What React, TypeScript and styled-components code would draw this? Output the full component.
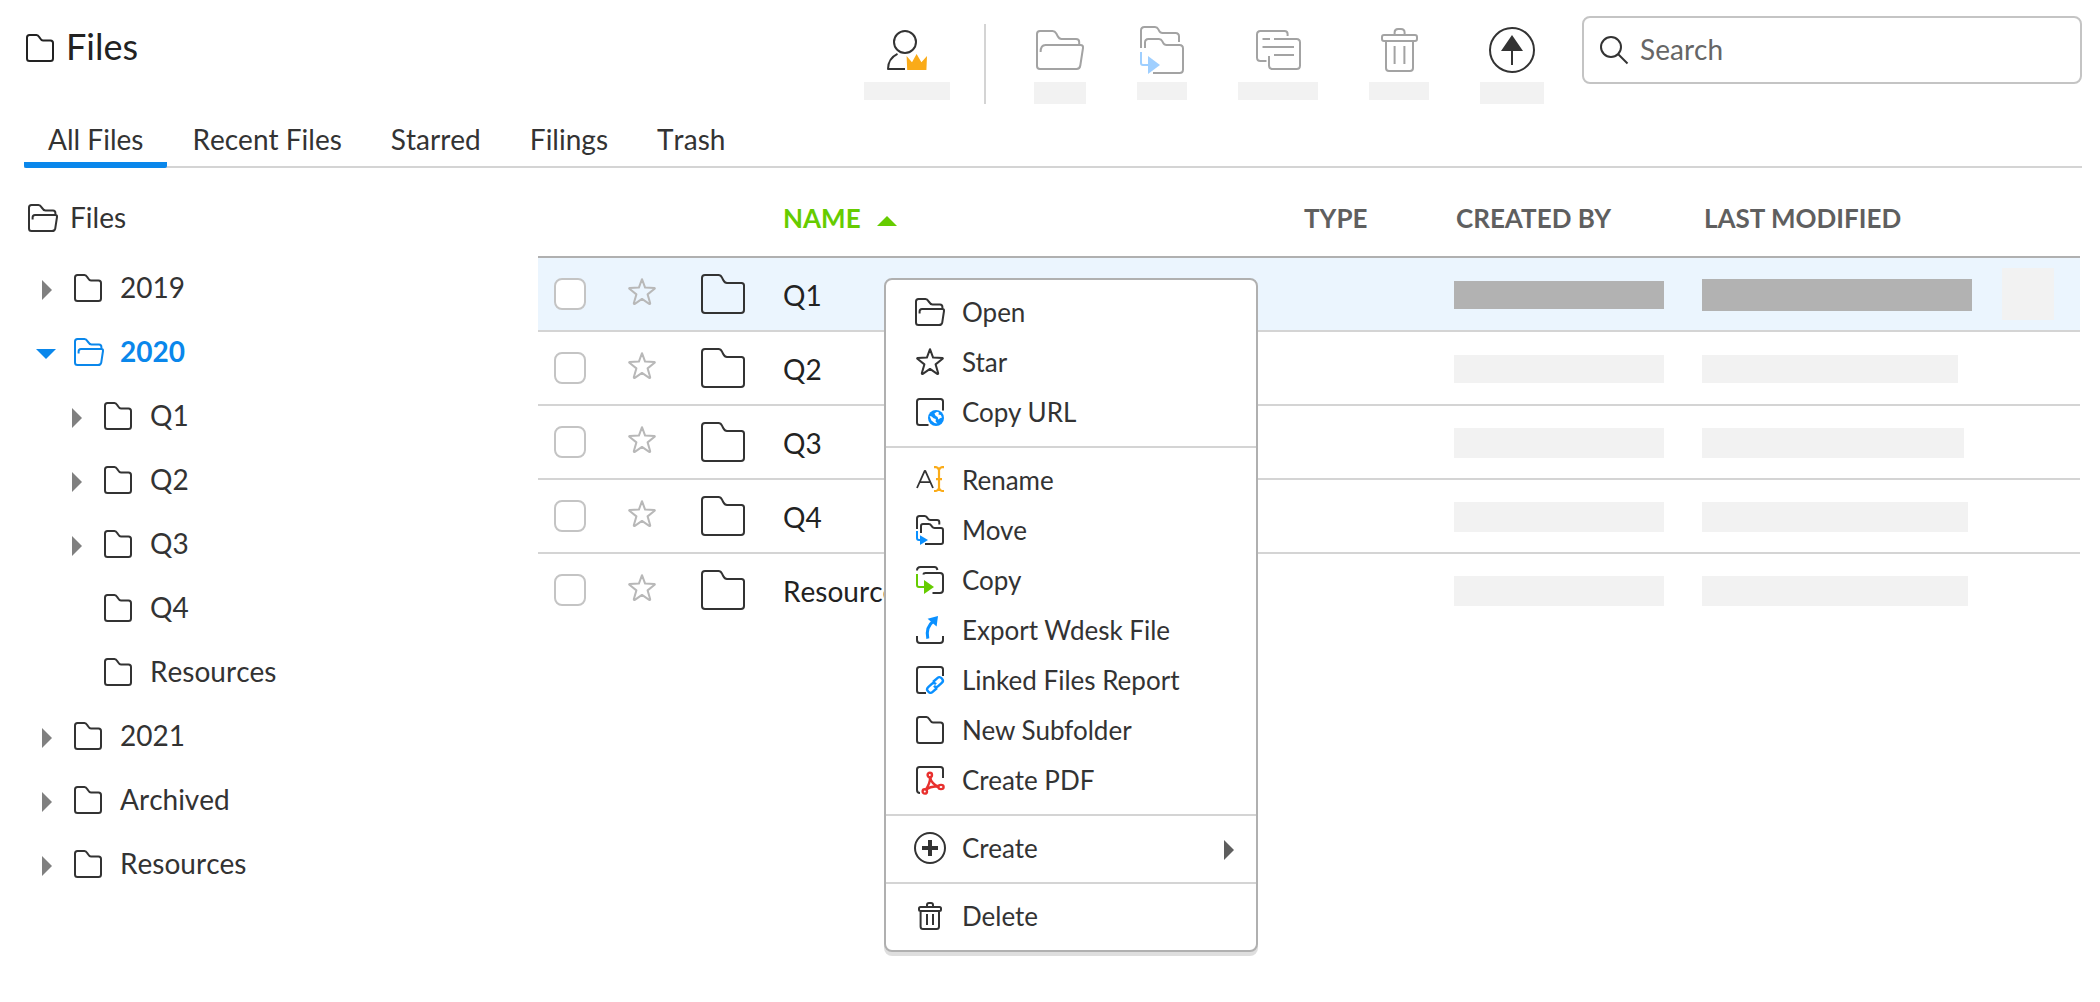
import React from "react";
import styled, { createGlobalStyle, css } from "styled-components";

const color = {
  ink: "#333333",
  strong: "#222222",
  soft: "#666666",
  heading: "#5f5f5f",
  faint: "#a3a3a3",
  rule: "#d4d4d4",
  ruleDark: "#b0b0b0",
  field: "#c4c4c4",
  blue: "#0a87eb",
  azure: "#0a90ff",
  green: "#66cc00",
  orange: "#faab18",
  red: "#e8302e",
  selected: "#ebf5fe",
  blank: "#f2f2f2",
  blankDark: "#b2b2b2",
};

const GlobalStyle = createGlobalStyle`
  * { box-sizing: border-box; }
  body {
    margin: 0;
    background: #ffffff;
    color: ${color.ink};
    font-family: Lato, "Liberation Sans", sans-serif;
    font-size: 28px;
    font-kerning: none;
  }
  button, input { font: inherit; color: inherit; }
`;

/* ---------- icons ---------- */

const Svg = styled.svg`
  display: block;
  flex: none;
  fill: none;
  stroke: currentColor;
  stroke-width: 2;
  stroke-linecap: butt;
  stroke-linejoin: round;
  overflow: visible;
`;

type IconProps = { w: number; h: number; children: React.ReactNode };
const Icon = ({ w, h, children }: IconProps) => (
  <Svg width={w} height={h} viewBox={`0 0 ${w} ${h}`} aria-hidden="true">
    {children}
  </Svg>
);

const FolderIcon = () => (
  <Icon w={28} h={28}>
    <path d="M1 3.5Q1 1 3.5 1H10.5C12 1 12.6 1.9 13.4 3.2C14.6 5.2 15.2 6.5 17 6.5H24.5Q27 6.5 27 9V24.5Q27 27 24.5 27H3.5Q1 27 1 24.5Z" />
  </Icon>
);

const LargeFolderIcon = () => (
  <Icon w={44} h={40}>
    <path d="M1 4Q1 1 4 1H17.5C19.4 1 20.2 2 21 3.6L22.2 6C23.2 8 24 9 26 9H40.5Q43 9 43 11.5V36Q43 39 40 39H4Q1 39 1 36Z" />
  </Icon>
);

const OpenFolderIcon = () => (
  <Icon w={30} h={28}>
    <path d="M4.6 15.5V13.5Q4.6 11 7 11H27.3Q29.3 11 29 13L27.3 24.2Q26.8 27 24 27H3.5Q1 27 1 24.5V3.5Q1 1 3.5 1H10.5C12 1 12.8 2 13.8 3.6C15 5.6 15.8 6.5 17.5 6.5H25Q27.4 6.5 27.4 9V11" />
  </Icon>
);

const LargeOpenFolderIcon = () => (
  <Icon w={48} h={40}>
    <path d="M4.6 22Q4.6 15 9.5 15H44.5Q47.4 15 47 18L44.3 35.5Q43.8 39 40.5 39H4Q1 39 1 36V4Q1 1 4 1H16.5C18.6 1 19.4 2 20.3 3.6L21.6 6C22.7 8.2 23.6 9 25.5 9H40Q43.2 9 43.2 12V15" />
  </Icon>
);

const StarIcon = () => (
  <Icon w={28} h={28}>
    <path d="M14 1.2L17.1 9.6L26.4 9.9Q27.2 10.1 26.6 10.8L19.6 16.4L22.2 25.2Q22.3 26.4 21.2 25.8L14 20.9L6.8 25.8Q5.7 26.4 5.8 25.2L8.4 16.4L1.4 10.8Q0.8 10.1 1.6 9.9L10.9 9.6Z" />
  </Icon>
);

const CopyUrlIcon = () => (
  <Icon w={28} h={28}>
    <path d="M12.5 27H3.5Q1 27 1 24.5V3.5Q1 1 3.5 1H24.5Q27 1 27 3.5V12.5" />
    <circle cx="20" cy="20" r="8" fill={color.azure} stroke="none" />
    <path d="M13.6 18L15.6 18.4L17.6 20.2L19.8 21L19.6 23.4L21.4 25.6L18.6 25L15.4 22.6Z M18.4 15.4L21 13.8L23 14.6L22.4 16.4L24.8 17L26 19.6L24 20.2L22.4 21.4L21.6 19L19.6 17.8Z" fill="#fff" stroke="none" />
  </Icon>
);

const RenameIcon = () => (
  <Icon w={28} h={28}>
    <path d="M1 22L8.7 4.8H9.3L17 22M4 16.2H14" strokeWidth="1.8" />
    <path d="M18 1.2H20Q22 1.4 23 4Q24 1.4 26 1.2H28M18 25H20Q22 24.8 23 22.2Q24 24.8 26 25H28M23 3.6V22.6M20 13.2H26" stroke={color.orange} strokeWidth="2.2" />
  </Icon>
);

const MoveIcon = () => (
  <Icon w={28} h={30}>
    <path d="M1 14V3.5Q1 1 3.5 1H8.5Q10 1 11 2.4L12 3.8Q12.8 5 14.5 5H21Q23.3 5 23.3 7V9.5" />
    <path d="M5 18V11Q5 9 7 9H12.8Q14.4 9 15.2 10.4L16.2 11.8Q17 13 18.6 13H25Q27 13 27 15V27Q27 29 25 29H9" />
    <path d="M1 16V23Q1 25 3 25H5" stroke={color.azure} />
    <path d="M4 20.3L12 25L4 30Z" fill={color.azure} stroke="none" />
  </Icon>
);

const LargeMoveIcon = () => (
  <Icon w={44} h={48}>
    <path d="M1 22V4.5Q1 1 4.5 1H15C17 1 17.6 1.8 18.4 3.4L19 4.6C19.8 6.4 20.6 7 22.5 7H35.5Q39 7 39 10.5V16" />
    <path d="M5 22V16.5Q5 13 8.5 13H19C21 13 21.6 13.8 22.4 15.4L23 16.6C23.8 18.4 24.6 19 26.5 19H39.5Q43 19 43 22.5V43.5Q43 47 39.5 47H13" />
    <path d="M1 26V37Q1 39 3 39H9" stroke="#9fcfff" />
    <path d="M8 30L20 39L8 48Z" fill="#9fcfff" stroke="none" />
  </Icon>
);

const CopyIcon = () => (
  <Icon w={28} h={28}>
    <path d="M1 4.5Q1 1 4.5 1H18.5Q21 1 21.4 4" />
    <path d="M7.2 8.6Q7.6 7 9.5 7H24Q27 7 27 10V24Q27 27 24 27H16.5" />
    <path d="M1 8V19Q1 21 3 21H9" stroke={color.green} />
    <path d="M8 14L18 21L8 28Z" fill={color.green} stroke="none" />
  </Icon>
);

const LargeCopyIcon = () => (
  <Icon w={45} h={40}>
    <path d="M10.5 31H4.5Q1 31 1 27.5V4.5Q1 1 4.5 1H28.5Q31.6 1 31.6 4V6" />
    <path d="M13 26V35.5Q13 39 16.5 39H40.5Q44 39 44 35.5V12.5Q44 9 40.5 9H18" />
    <path d="M6.5 9H14M6.5 17H38M18 25H38" />
  </Icon>
);

const ExportIcon = () => (
  <Icon w={28} h={28}>
    <path d="M1 20V24Q1 27 4 27H24Q27 27 27 24V20" />
    <path d="M11.8 22.6C10.4 16 11.4 9.6 17.5 5" stroke={color.azure} strokeWidth="3" />
    <path d="M22 0L20.6 10.6L11.6 2.8Z" fill={color.azure} stroke="none" />
  </Icon>
);

const LinkedFilesIcon = () => (
  <Icon w={28} h={28}>
    <path d="M10 27H3.5Q1 27 1 24.5V3.5Q1 1 3.5 1H24.5Q27 1 27 3.5V10" />
    <g transform="translate(19 19) rotate(-42)" stroke={color.azure} strokeWidth="2.4">
      <path d="M-0.5 3.6H-6.4Q-9.4 3.6 -9.4 0.6V0Q-9.4 -3 -6.4 -3H-1.6Q1.2 -3 1.4 0" />
      <path d="M0.5 -3.6H6.4Q9.4 -3.6 9.4 -0.6V0Q9.4 3 6.4 3H1.6Q-1.2 3 -1.4 0" />
    </g>
  </Icon>
);

const PdfIcon = () => (
  <Icon w={28} h={28}>
    <path d="M4 27Q1 27 1 24V3.5Q1 1 3.5 1H24.5Q27 1 27 3.5V12" />
    <g stroke={color.red} strokeWidth="2.4">
      <circle cx="13.8" cy="9" r="2.2" />
      <circle cx="8.8" cy="25.4" r="2.2" />
      <ellipse cx="25" cy="21" rx="2.6" ry="2.1" />
      <path d="M14.2 11C14.6 15.6 18.6 19.6 22.6 20.4M14 11C14.4 16 12 20.4 9.8 23.6M10.6 23.2C14 20.6 18.4 20 22.6 20.8" />
    </g>
  </Icon>
);

const CreateIcon = () => (
  <Icon w={32} h={32}>
    <circle cx="16" cy="16" r="15" />
    <path d="M16 8V24M8 16H24" strokeWidth="4" />
  </Icon>
);

const TrashIcon = () => (
  <Icon w={24} h={28}>
    <path d="M2.5 5H21.5Q23 5 23 6.5V7.5Q23 9 21.5 9H2.5Q1 9 1 7.5V6.5Q1 5 2.5 5ZM9 5V3Q9 1 11 1H13Q15 1 15 3V5M2.6 9V24.5Q2.6 27 5 27H18.6Q21 27 21 24.5V9M9 12V23M15 12V23" />
  </Icon>
);

const LargeTrashIcon = () => (
  <Icon w={37} h={44}>
    <path d="M3 7H34Q36 7 36 9V11Q36 13 34 13H3Q1 13 1 11V9Q1 7 3 7ZM13.6 7V4.5Q13.6 1 17 1H20Q23.6 1 23.6 4.5V7M5 13V40Q5 43 8 43H29Q32 43 32 40V13M13.6 18V36M23.4 18V36" />
  </Icon>
);

const UploadIcon = () => (
  <Icon w={46} h={46}>
    <circle cx="23" cy="23" r="22" />
    <path d="M23 22V38" />
    <path d="M23 8L34 24H12Z" fill="currentColor" stroke="none" />
  </Icon>
);

const OwnerIcon = () => (
  <Icon w={40} h={40}>
    <circle cx="18" cy="12" r="11" />
    <path d="M10.5 23.8C4 27 1 32.5 1 39H18" />
    <path d="M19.6 26L25 32.2L29.6 24L34.4 32.2L40 26L39.4 40H20.2Z" fill={color.orange} stroke="none" />
  </Icon>
);

const SearchIcon = () => (
  <Icon w={28} h={28}>
    <circle cx="11" cy="11" r="10" />
    <path d="M18 18L27.5 27.5" />
  </Icon>
);

type CaretDirection = "right" | "down" | "up";
const CARETS: Record<CaretDirection, [number, number, string]> = {
  right: [12, 20, "M2 0L12 10L2 20Z"],
  down: [20, 10, "M0 0H20L10 10Z"],
  up: [20, 10, "M0 10L10 0L20 10Z"],
};
const Caret = ({ to }: { to: CaretDirection }) => {
  const [w, h, d] = CARETS[to];
  return (
    <Icon w={w} h={h}>
      <path d={d} fill="currentColor" stroke="none" />
    </Icon>
  );
};

/* ---------- header ---------- */

const Page = styled.div`
  min-height: 100vh;
  padding: 0 18px 40px 24px;
`;

const Header = styled.header`
  display: flex;
  align-items: flex-start;
  height: 120px;
`;

const Title = styled.h1`
  display: flex;
  align-items: center;
  gap: 12px;
  flex: 1;
  margin: 0;
  padding: 24px 0 0 2px;
  color: ${color.strong};
  font-size: 36px;
  font-weight: 400;
  line-height: 44px;
  & > svg { margin-top: 4px; }
`;

const Toolbar = styled.div`
  display: flex;
  gap: 51px;
  padding-top: 24px;
  margin-right: 38px;
`;

const ToolGroup = styled.div`
  padding-right: 34px;
  margin-right: -3px;
  border-right: 2px solid ${color.rule};
  height: 80px;
`;

const ToolButton = styled.button`
  display: flex;
  flex-direction: column;
  align-items: center;
  gap: 6px;
  padding: 0;
  border: 0;
  background: none;
  color: ${color.ink};
  cursor: pointer;
  &:disabled { color: ${color.faint}; cursor: default; }
`;

const ToolGlyph = styled.span`
  display: flex;
  align-items: center;
  justify-content: center;
  height: 52px;
`;

const Blank = styled.span<{ $w: number; $h: number; $dark?: boolean }>`
  display: block;
  width: ${(p) => p.$w}px;
  height: ${(p) => p.$h}px;
  background: ${(p) => (p.$dark ? color.blankDark : color.blank)};
`;

const SearchBox = styled.label`
  display: flex;
  align-items: center;
  gap: 12px;
  flex: 0 1 500px;
  height: 68px;
  margin-top: 16px;
  padding: 0 16px;
  border: 2px solid ${color.field};
  border-radius: 8px;
`;

const SearchInput = styled.input`
  flex: 1;
  min-width: 0;
  padding: 0 0 2px;
  border: 0;
  outline: 0;
  background: none;
  line-height: 34px;
  &::placeholder { color: ${color.soft}; opacity: 1; }
`;

const Tabs = styled.nav`
  display: flex;
  gap: 1px;
  height: 48px;
  border-bottom: 2px solid ${color.rule};
`;

const Tab = styled.a<{ $active?: boolean }>`
  height: 48px;
  padding: 0 24px;
  color: ${color.ink};
  line-height: 38px;
  text-decoration: none;
  ${(p) =>
    p.$active &&
    css`
      background: linear-gradient(${color.blue}, ${color.blue}) bottom / 100% 6px no-repeat;
      border-radius: 0 0 2px 2px;
    `}
`;

/* ---------- folder tree ---------- */

const Body = styled.div`
  display: flex;
  padding: 12px 2px 0 0;
`;

const Sidebar = styled.aside`
  flex: 0 0 514px;
`;

const TreeLabel = styled.span`
  padding-bottom: 2px;
`;

const TreeRoot = styled.a`
  display: flex;
  align-items: center;
  gap: 12px;
  height: 76px;
  padding-left: 4px;
  color: ${color.ink};
  text-decoration: none;
`;

const Tree = styled.ul`
  margin: 0;
  padding: 0;
  list-style: none;
`;

const Branch = styled.li<{ $level: number; $current?: boolean }>`
  display: flex;
  align-items: center;
  height: 64px;
  padding-left: ${(p) => 10 + p.$level * 30}px;
  color: ${(p) => (p.$current ? color.blue : color.ink)};
  font-weight: ${(p) => (p.$current ? 700 : 400)};
`;

const Toggle = styled.button<{ $current?: boolean }>`
  display: flex;
  justify-content: center;
  width: 24px;
  margin-right: 16px;
  padding: 4px 0 0;
  border: 0;
  background: none;
  color: ${(p) => (p.$current ? color.blue : "#808080")};
  cursor: pointer;
`;

const NoToggle = styled.span`
  width: 40px;
`;

const BranchLink = styled.a`
  display: flex;
  align-items: center;
  color: inherit;
  text-decoration: none;
`;

const BranchIcon = styled.span`
  width: 46px;
`;

type Node = { name: string; level: number; toggle?: "right" | "down" };
const TREE: Node[] = [
  { name: "2019", level: 0, toggle: "right" },
  { name: "2020", level: 0, toggle: "down" },
  { name: "Q1", level: 1, toggle: "right" },
  { name: "Q2", level: 1, toggle: "right" },
  { name: "Q3", level: 1, toggle: "right" },
  { name: "Q4", level: 1 },
  { name: "Resources", level: 1 },
  { name: "2021", level: 0, toggle: "right" },
  { name: "Archived", level: 0, toggle: "right" },
  { name: "Resources", level: 0, toggle: "right" },
];

/* ---------- file table ---------- */

const Main = styled.main`
  position: relative;
  flex: 1;
  min-width: 0;
`;

const Table = styled.table`
  width: 100%;
  table-layout: fixed;
  border-collapse: separate;
  border-spacing: 0;
`;

const Col = styled.col<{ $w?: number }>`
  width: ${(p) => (p.$w ? `${p.$w}px` : "auto")};
`;

const Th = styled.th<{ $inset?: boolean }>`
  height: 78px;
  padding: 0 0 0 ${(p) => (p.$inset ? 2 : 0)}px;
  border-bottom: 2px solid ${color.ruleDark};
  color: ${color.heading};
  font-size: 26px;
  font-weight: 700;
  font-kerning: normal;
  text-align: left;
  white-space: nowrap;
`;

const SortButton = styled.button`
  display: flex;
  align-items: center;
  gap: 16px;
  padding: 0;
  border: 0;
  background: none;
  color: ${color.green};
  cursor: pointer;
  & > svg { margin-top: 6px; }
`;

const Row = styled.tr<{ $selected?: boolean }>`
  background: ${(p) => (p.$selected ? color.selected : "transparent")};
  &:not(:last-child) > td { border-bottom: 2px solid ${color.rule}; }
  &:last-child > td { height: 72px; }
`;

const Td = styled.td`
  height: 74px;
  padding: 0;
  vertical-align: middle;
`;

const TextTd = styled(Td)`
  padding-top: 2px;
  white-space: nowrap;
`;

const Check = styled.input`
  appearance: none;
  display: block;
  width: 32px;
  height: 32px;
  margin: 0 0 0 16px;
  border: 2px solid ${color.field};
  border-radius: 8px;
  background: #ffffff;
  &:checked { background: ${color.blue}; }
`;

const StarButton = styled.button`
  display: block;
  padding: 0 0 4px;
  border: 0;
  background: none;
  color: #b8b8b8;
  cursor: pointer;
`;

const FileLink = styled.a`
  color: ${color.strong};
  text-decoration: none;
`;

type FileRow = { name: string; created: number; modified: [number, number]; selected?: boolean };
const FILES: FileRow[] = [
  { name: "Q1", created: 28, modified: [270, 32], selected: true },
  { name: "Q2", created: 28, modified: [256, 28] },
  { name: "Q3", created: 30, modified: [262, 30] },
  { name: "Q4", created: 30, modified: [266, 30] },
  { name: "Resources", created: 30, modified: [266, 30] },
];

/* ---------- context menu ---------- */

const Menu = styled.div`
  position: absolute;
  top: 98px;
  left: 346px;
  width: 374px;
  border: 2px solid ${color.ruleDark};
  border-radius: 8px;
  background: #ffffff;
  box-shadow: 0 4px 0 rgba(0, 0, 0, 0.13);
  font-kerning: normal;
`;

const MenuSection = styled.div`
  padding: 7px 0 9px;
  & + & { border-top: 2px solid ${color.rule}; }
`;

const MenuItem = styled.button`
  display: flex;
  align-items: center;
  width: 100%;
  height: 50px;
  padding: 0 22px 0 28px;
  border: 0;
  background: none;
  font-size: 26px;
  font-kerning: inherit;
  text-align: left;
  cursor: pointer;
  & > svg { margin-top: 4px; color: #5e5e5e; }
`;

const MenuGlyph = styled.span`
  display: flex;
  justify-content: center;
  width: 32px;
  margin-right: 16px;
`;

const MenuLabel = styled.span`
  flex: 1;
`;

type Action = { label: string; icon: React.ReactNode; submenu?: boolean };
const MENU: Action[][] = [
  [
    { label: "Open", icon: <OpenFolderIcon /> },
    { label: "Star", icon: <StarIcon /> },
    { label: "Copy URL", icon: <CopyUrlIcon /> },
  ],
  [
    { label: "Rename", icon: <RenameIcon /> },
    { label: "Move", icon: <MoveIcon /> },
    { label: "Copy", icon: <CopyIcon /> },
    { label: "Export Wdesk File", icon: <ExportIcon /> },
    { label: "Linked Files Report", icon: <LinkedFilesIcon /> },
    { label: "New Subfolder", icon: <FolderIcon /> },
    { label: "Create PDF", icon: <PdfIcon /> },
  ],
  [{ label: "Create", icon: <CreateIcon />, submenu: true }],
  [{ label: "Delete", icon: <TrashIcon /> }],
];

type ToolProps = { label: string; icon: React.ReactNode; w: number; h: number; disabled?: boolean };
const Tool = ({ label, icon, w, h, disabled }: ToolProps) => (
  <ToolButton type="button" aria-label={label} disabled={disabled}>
    <ToolGlyph>{icon}</ToolGlyph>
    <Blank $w={w} $h={h} />
  </ToolButton>
);

export default function App() {
  return (
    <>
      <GlobalStyle />
      <Page>
        <Header>
          <Title>
            <FolderIcon />
            Files
          </Title>
          <Toolbar role="toolbar" aria-label="File actions">
            <ToolGroup>
              <Tool label="Owner" icon={<OwnerIcon />} w={86} h={18} />
            </ToolGroup>
            <Tool label="Open" icon={<LargeOpenFolderIcon />} w={52} h={22} disabled />
            <Tool label="Move" icon={<LargeMoveIcon />} w={50} h={18} disabled />
            <Tool label="Copy" icon={<LargeCopyIcon />} w={80} h={18} disabled />
            <Tool label="Delete" icon={<LargeTrashIcon />} w={60} h={18} disabled />
            <Tool label="Upload" icon={<UploadIcon />} w={64} h={22} />
          </Toolbar>
          <SearchBox>
            <SearchIcon />
            <SearchInput type="search" placeholder="Search" aria-label="Search" />
          </SearchBox>
        </Header>

        <Tabs>
          {["All Files", "Recent Files", "Starred", "Filings", "Trash"].map((name, i) => (
            <Tab key={name} href="#" $active={i === 0}>
              {name}
            </Tab>
          ))}
        </Tabs>

        <Body>
          <Sidebar>
            <TreeRoot href="#">
              <OpenFolderIcon />
              <TreeLabel>Files</TreeLabel>
            </TreeRoot>
            <Tree>
              {TREE.map((node, i) => {
                const open = node.toggle === "down";
                return (
                  <Branch key={i} $level={node.level} $current={open}>
                    {node.toggle ? (
                      <Toggle type="button" aria-label={`Toggle ${node.name}`} $current={open}>
                        <Caret to={node.toggle} />
                      </Toggle>
                    ) : (
                      <NoToggle />
                    )}
                    <BranchLink href="#">
                      <BranchIcon>{open ? <OpenFolderIcon /> : <FolderIcon />}</BranchIcon>
                      <TreeLabel>{node.name}</TreeLabel>
                    </BranchLink>
                  </Branch>
                );
              })}
            </Tree>
          </Sidebar>

          <Main>
            <Table>
              <colgroup>
                <Col $w={90} />
                <Col $w={73} />
                <Col $w={82} />
                <Col />
                <Col $w={150} />
                <Col $w={248} />
                <Col $w={300} />
                <Col $w={78} />
              </colgroup>
              <thead>
                <tr>
                  <Th />
                  <Th />
                  <Th />
                  <Th aria-sort="ascending">
                    <SortButton type="button">
                      NAME
                      <Caret to="up" />
                    </SortButton>
                  </Th>
                  <Th>TYPE</Th>
                  <Th $inset>CREATED BY</Th>
                  <Th $inset>LAST MODIFIED</Th>
                  <Th />
                </tr>
              </thead>
              <tbody>
                {FILES.map((file) => (
                  <Row key={file.name} $selected={file.selected}>
                    <Td>
                      <Check type="checkbox" aria-label={`Select ${file.name}`} />
                    </Td>
                    <Td>
                      <StarButton type="button" aria-label={`Star ${file.name}`}>
                        <StarIcon />
                      </StarButton>
                    </Td>
                    <Td>
                      <LargeFolderIcon />
                    </Td>
                    <TextTd>
                      <FileLink href="#">{file.name}</FileLink>
                    </TextTd>
                    <Td />
                    <TextTd>
                      <Blank $w={210} $h={file.created} $dark={file.selected} />
                    </TextTd>
                    <TextTd>
                      <Blank $w={file.modified[0]} $h={file.modified[1]} $dark={file.selected} />
                    </TextTd>
                    <Td>{file.selected && <Blank $w={52} $h={52} />}</Td>
                  </Row>
                ))}
              </tbody>
            </Table>

            <Menu role="menu">
              {MENU.map((section, i) => (
                <MenuSection key={i}>
                  {section.map((item) => (
                    <MenuItem key={item.label} type="button" role="menuitem">
                      <MenuGlyph>{item.icon}</MenuGlyph>
                      <MenuLabel>{item.label}</MenuLabel>
                      {item.submenu && <Caret to="right" />}
                    </MenuItem>
                  ))}
                </MenuSection>
              ))}
            </Menu>
          </Main>
        </Body>
      </Page>
    </>
  );
}
